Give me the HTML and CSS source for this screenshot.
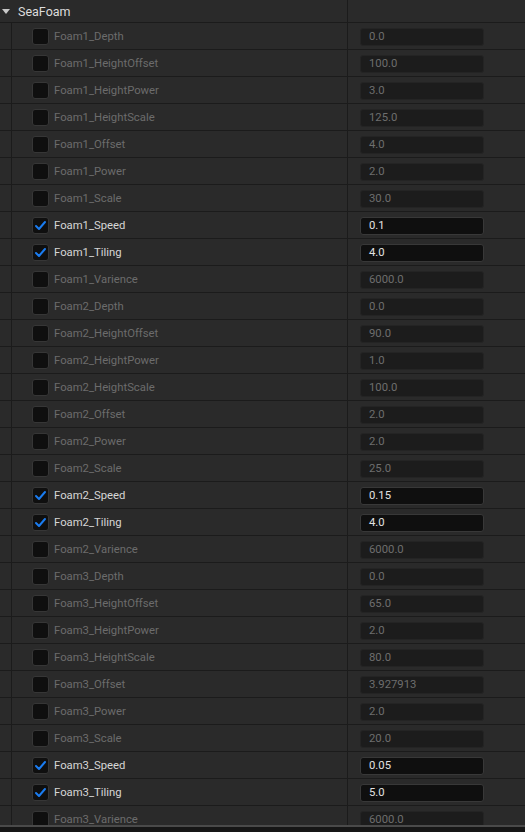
FILE: index.html
```html
<!DOCTYPE html>
<html>
<head>
<meta charset="utf-8">
<link rel="stylesheet" href="styles.css">
</head>
<body>
<div class="panel">
  <div class="header">
    <div class="hname"><span class="arrow"></span><span class="title">SeaFoam</span></div>
    <div class="vsep"></div>
    <div class="hval"></div>
  </div>
  <div id="rows"></div>
  <div class="bottom"></div>
</div>
<script>
const data = [
 ["Foam1_Depth","0.0",0],["Foam1_HeightOffset","100.0",0],["Foam1_HeightPower","3.0",0],["Foam1_HeightScale","125.0",0],["Foam1_Offset","4.0",0],["Foam1_Power","2.0",0],["Foam1_Scale","30.0",0],["Foam1_Speed","0.1",1],["Foam1_Tiling","4.0",1],["Foam1_Varience","6000.0",0],
 ["Foam2_Depth","0.0",0],["Foam2_HeightOffset","90.0",0],["Foam2_HeightPower","1.0",0],["Foam2_HeightScale","100.0",0],["Foam2_Offset","2.0",0],["Foam2_Power","2.0",0],["Foam2_Scale","25.0",0],["Foam2_Speed","0.15",1],["Foam2_Tiling","4.0",1],["Foam2_Varience","6000.0",0],
 ["Foam3_Depth","0.0",0],["Foam3_HeightOffset","65.0",0],["Foam3_HeightPower","2.0",0],["Foam3_HeightScale","80.0",0],["Foam3_Offset","3.927913",0],["Foam3_Power","2.0",0],["Foam3_Scale","20.0",0],["Foam3_Speed","0.05",1],["Foam3_Tiling","5.0",1],["Foam3_Varience","6000.0",0]
];
const check = '<svg width="13" height="13" viewBox="0 0 13 13"><path d="M2 7 L5 10 L11 3" fill="none" stroke="#1a7cf0" stroke-width="2" stroke-linecap="round" stroke-linejoin="round"/></svg>';
const host = document.getElementById('rows');
host.innerHTML = data.map(([n,v,on]) =>
 `<div class="row${on?' on':''}"><div class="name"><div class="indent"></div><div class="cb">${on?check:''}</div><span class="label">${n}</span></div><div class="vsep"></div><div class="val"><div class="box">${v}</div></div></div>`
).join('');
</script>
</body>
</html>
```
FILE: styles.css
```css
html, body { margin: 0; padding: 0; background: #1e1e1e; }
body { width: 525px; height: 832px; overflow: hidden; font-family: Roboto, "Noto Sans", sans-serif; }
.panel { position: relative; height: 832px; overflow: hidden; background: #2a2a2a; }
.header { display: grid; grid-template-columns: 347px 1px 1fr; height: 22px; border-bottom: 1px solid #1b1b1b; background: #2a2a2a; }
.hname { display: flex; align-items: center; }
.arrow { width: 0; height: 0; border-left: 4px solid transparent; border-right: 4px solid transparent; border-top: 5px solid #c8c8c8; margin-left: 2px; margin-right: 8px; }
.title { color: #dcdcdc; font-size: 12.5px; }
.vsep { background: #1b1b1b; }
.row { display: grid; grid-template-columns: 347px 1px 1fr; height: 26px; border-bottom: 1px solid #1b1b1b; }
.name { display: flex; align-items: center; height: 26px; }
.indent { width: 11px; height: 100%; border-right: 1px solid #1b1b1b; box-sizing: content-box; margin-right: 20px; }
.cb { width: 15px; height: 15px; border: 1px solid #363636; border-radius: 3px; background: #0f0f0f; display: flex; align-items: center; justify-content: center; margin-top: 1px; }
.label { margin-left: 5px; font-size: 11.3px; color: #6c6c6c; }
.row.on .label { color: #d6d6d6; }
.val { display: flex; align-items: center; padding-left: 12px; }
.box { width: 124px; height: 18px; box-sizing: border-box; border: 1px solid #242424; border-radius: 3px; background: #1c1c1c; color: #6e6e6e; font-size: 11.3px; line-height: 16px; padding-left: 8px; margin-top: 1px; }
.row.on .box { background: #0f0f0f; border-color: #383838; color: #e2e2e2; }
.bottom { position: absolute; left: 0; right: 0; top: 825px; height: 7px; background: #161616; border-top: 2px solid #4a4a4a; }
```
